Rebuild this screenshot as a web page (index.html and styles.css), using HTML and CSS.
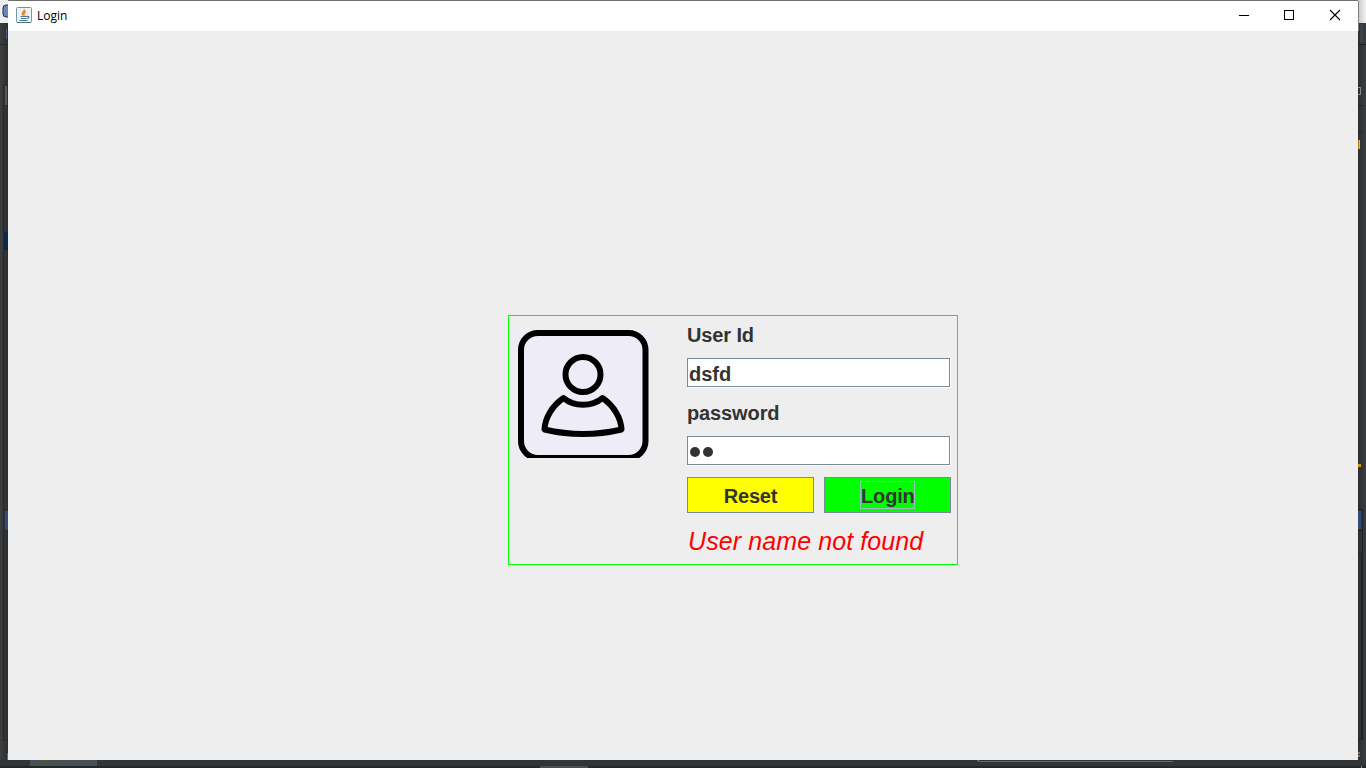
FILE: index.html
```html
<!DOCTYPE html>
<html lang="en">
<head>
<meta charset="utf-8">
<title>Login</title>
<link rel="stylesheet" href="styles.css">
</head>
<body>
<svg class="backdrop" width="1366" height="768" viewBox="0 0 1366 768" shape-rendering="crispEdges" aria-hidden="true">
  <defs>
    <linearGradient id="shade"><stop offset="0" stop-color="#3c3f41"/><stop offset="1" stop-color="#2c2e30"/></linearGradient>
    <linearGradient id="shadeR"><stop offset="0" stop-color="#2c2e30"/><stop offset="1" stop-color="#3a3d3f"/></linearGradient>
    <linearGradient id="light"><stop offset="0" stop-color="#c8c8c8"/><stop offset="1" stop-color="#f2f2f2"/></linearGradient>
  </defs>
  <rect width="1366" height="768" fill="#323537"/>
  <rect width="8" height="760" fill="url(#shade)"/>
  <rect width="8" height="23" fill="#eee"/>
  <rect x="3" y="5" width="8" height="12" rx="3" fill="#6b87b5" stroke="#252f55" shape-rendering="auto"/>
  <path d="M0 44.5h8" stroke="#252728"/>
  <path d="M6.500 29v10" stroke="#455d80"/>
  <path d="M3.500 84v656h5M3 84.500h5M3 105.500h5M3 509.500h5M3 530.500h5" fill="none" stroke="#26282a"/>
  <rect x="5" y="86" width="2" height="19" fill="#54585a"/>
  <rect x="4" y="232" width="4" height="18" fill="#0d2943"/>
  <rect x="5" y="511" width="3" height="19" fill="#304a7c"/>
  <path d="M7.500 753v7" stroke="#656868"/>
  <rect x="1358" width="8" height="760" fill="url(#shadeR)"/>
  <rect x="1358" width="8" height="23" fill="url(#light)"/>
  <rect x="1360" y="24" width="3" height="19" fill="#3a4345"/>
  <path d="M1358 44.500h8M1358 105.500h5M1358 132.500h4" stroke="#202223"/>
  <path d="M1358 87.500h2.500v7h-2.500" fill="none" stroke="#888"/>
  <rect x="1358" y="140" width="1" height="9" fill="#a87b18"/>
  <rect x="1359" y="140" width="1" height="9" fill="#bbb"/>
  <rect x="1358" y="464" width="3" height="3" fill="#c79b0b"/>
  <path d="M1358 509.500h4.500v230h-4.500M1358 530.500h4M1358 553.500h3v185" fill="none" stroke="#202224"/>
  <rect x="1358" y="511" width="3" height="18" fill="#304a7c"/>
  <path d="M1358 752.500h2M1358 756h2" stroke="#806f60" stroke-width="2"/>
  <rect x="30" y="760" width="67" height="6" fill="#485053"/>
  <rect x="43" y="760" width="6" height="1" fill="#5c5520"/>
  <path d="M977 760.500h1v1h194v-1" fill="none" stroke="#66696b"/>
  <rect y="766" width="1366" height="2" fill="#242627"/>
  <rect x="540" y="766" width="48" height="2" fill="#4c4d4e"/>
  <path d="M1361.500 766v2" stroke="#888"/>
</svg>

<main class="window">
  <header class="titlebar">
    <svg class="java-icon" width="16" height="16" viewBox="0 0 16 16">
      <rect x=".5" y=".5" width="15" height="15" rx="1" fill="#edf2f5" stroke="#7896a9"/>
      <path d="M1 15.500h14" stroke="#4d7289"/>
      <path d="M8.500 2.500C9 4.500 5.500 5 6.500 7.500L7.500 8.500M10 4.500C7.500 5.500 7.500 6.500 8.500 8.500" fill="none" stroke="#e88733" stroke-width="1.600"/>
      <path d="M4.500 9.500h6.500M5 11.500h5M3.500 13.500h8M11 9.500c3-.8 2 2-.5 2" fill="none" stroke="#517b9b" stroke-width="1.200"/>
    </svg>
    <h1 class="title">Login</h1>
    <div class="controls">
      <svg width="45" height="30" viewBox="0 0 45 30"><path d="M17 14.500h10" stroke="#000"/></svg>
      <svg width="45" height="30" viewBox="0 0 45 30"><path d="M17.500 9.500h9v9h-9z" fill="none" stroke="#000" shape-rendering="crispEdges"/></svg>
      <svg width="46" height="30" viewBox="0 0 46 30"><path d="M18 9l10 10M28 9l-10 10" stroke="#000" stroke-width="1.100"/></svg>
    </div>
  </header>
  <div class="content">
    <section class="panel">
      <svg class="avatar" width="131" height="128" viewBox="0 0 131 128">
        <rect width="131" height="128" fill="#eeecf6"/>
        <rect x="3" y="3" width="124.500" height="125" rx="17" fill="none" stroke="#000" stroke-width="6"/>
        <circle cx="65" cy="44.500" r="17.500" fill="none" stroke="#000" stroke-width="6"/>
        <path d="M45.500 68C56 77 74 77 84.500 68C96 76 103 88 103.500 99.500Q65 108.500 26.500 99.500C27 88 34 76 45.500 68Z" fill="none" stroke="#000" stroke-width="6" stroke-linejoin="round"/>
      </svg>
      <form class="form">
        <label class="label">User Id</label>
        <div class="field">dsfd</div>
        <label class="label">password</label>
        <div class="field"><i class="dot"></i><i class="dot"></i></div>
        <div class="buttons">
          <button type="button" class="button reset">Reset</button>
          <button type="button" class="button login"><span class="focus">Login</span></button>
        </div>
        <p class="message">User name not found</p>
      </form>
    </section>
  </div>
</main>
</body>
</html>
```
FILE: styles.css
```css
* { box-sizing: border-box; }
body {
  margin: 0;
  width: 1366px;
  height: 768px;
  overflow: hidden;
  font-family: "Liberation Sans", Arial, sans-serif;
}
.backdrop { position: absolute; left: 0; top: 0; }
.window {
  position: absolute;
  left: 8px;
  top: 0;
  width: 1350px;
  height: 760px;
  display: flex;
  flex-direction: column;
  background: #eee;
  border-top: 1px solid #707070;
}
.titlebar {
  height: 30px;
  display: flex;
  align-items: center;
  padding-left: 8px;
  background: #fff;
  box-shadow: 1px 0 #808080;
}
.java-icon { margin-top: -2px; }
.title {
  margin: 0 0 0 5px;
  font: 400 12px/30px "Open Sans", "Noto Sans", sans-serif;
  color: #000;
}
.controls { display: flex; margin-left: auto; }
.content { flex: 1; padding: 284px 0 0 500px; }
.panel {
  width: 450px;
  height: 250px;
  display: flex;
  border: 1px solid #0f0;
}
.avatar { margin: 14px 0 0 9px; }
.form { width: 264px; margin-left: 38px; color: #333; }
.label {
  display: block;
  height: 42px;
  font-size: 20px;
  font-weight: 700;
  line-height: 38px;
  letter-spacing: -0.12px;
}
.field {
  width: 263px;
  height: 29px;
  margin-bottom: 7px;
  padding: 3px 0 0 1px;
  display: flex;
  align-items: center;
  background: #fff;
  border: 1px solid #7a8a99;
  box-shadow: 1px 1px #fff;
  font-size: 20px;
  font-weight: 700;
  line-height: 24px;
}
.dot {
  width: 10px;
  height: 10px;
  margin: 0 2px 0 1px;
  border-radius: 50%;
  background: #333;
}
.buttons { display: flex; gap: 10px; margin-top: 12px; }
.button {
  width: 127px;
  height: 36px;
  padding: 0;
  display: flex;
  align-items: center;
  justify-content: center;
  border: 1px solid #7a8a99;
  font: 700 20px/28px "Liberation Sans", Arial, sans-serif;
  letter-spacing: -0.15px;
  color: #333;
}
.reset { padding-top: 2px; background: #ff0; }
.login { background: #0f0; }
.focus {
  width: 55px;
  height: 28px;
  border: 1px solid #a3b8cc;
  line-height: 28px;
}
.message {
  margin: 13px 0 0 1px;
  font-size: 25px;
  font-style: italic;
  line-height: 30px;
  letter-spacing: 0.1px;
  white-space: nowrap;
  color: #f00;
}
```
